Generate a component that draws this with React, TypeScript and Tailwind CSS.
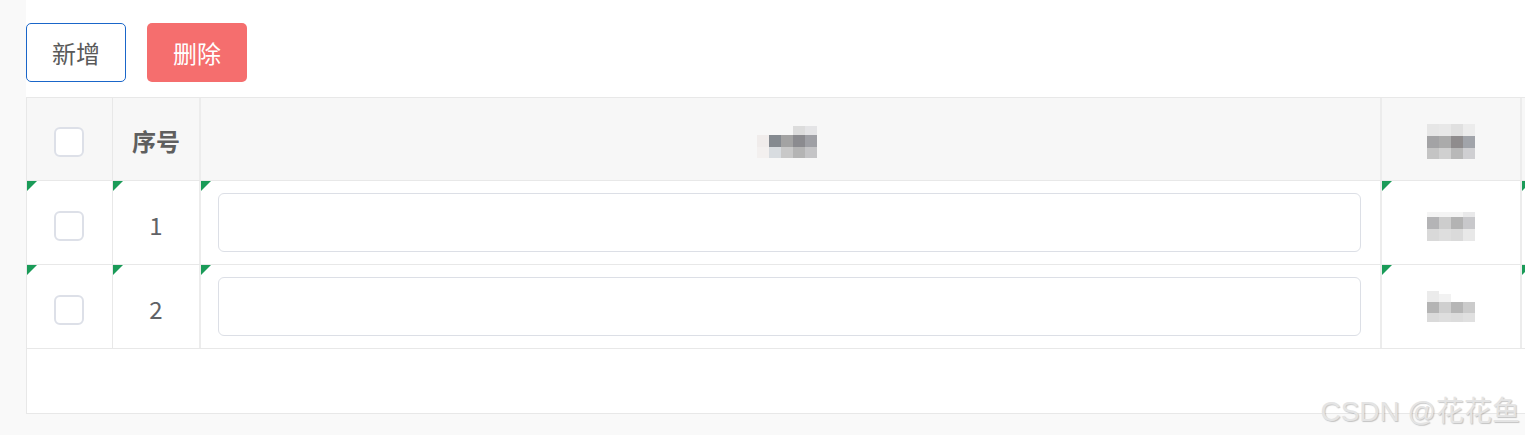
import React from "react";

type Cell = { x: number; y: number; w: number; h: number; c: string };

// blurred (mosaic) text cells, coords relative to each mosaic box
const headTitle: Cell[] = [
  { x: 36, y: 0, w: 12, h: 9, c: "#dcdcdc" },
  { x: 48, y: 0, w: 12, h: 9, c: "#e4e4e6" },
  { x: 0, y: 9, w: 12, h: 12, c: "#f0eceb" },
  { x: 12, y: 9, w: 12, h: 12, c: "#858a90" },
  { x: 24, y: 9, w: 12, h: 12, c: "#a3a3a3" },
  { x: 36, y: 9, w: 12, h: 12, c: "#8b8b8f" },
  { x: 48, y: 9, w: 12, h: 12, c: "#9fa0a5" },
  { x: 0, y: 21, w: 12, h: 11, c: "#f3f0ef" },
  { x: 12, y: 21, w: 12, h: 11, c: "#d8dce0" },
  { x: 24, y: 21, w: 12, h: 11, c: "#c8c8c8" },
  { x: 36, y: 21, w: 12, h: 11, c: "#b4b4b4" },
  { x: 48, y: 21, w: 12, h: 11, c: "#c4c4c6" },
];

const headType: Cell[] = [
  { x: 0, y: 0, w: 12, h: 12, c: "#e6e6e6" },
  { x: 12, y: 0, w: 12, h: 12, c: "#e8e8e8" },
  { x: 24, y: 0, w: 12, h: 12, c: "#e0e0e0" },
  { x: 36, y: 0, w: 12, h: 12, c: "#ececec" },
  { x: 0, y: 12, w: 12, h: 12, c: "#a3a3a5" },
  { x: 12, y: 12, w: 12, h: 12, c: "#ababab" },
  { x: 24, y: 12, w: 12, h: 12, c: "#8f8c8d" },
  { x: 36, y: 12, w: 12, h: 12, c: "#a1a4aa" },
  { x: 0, y: 24, w: 12, h: 11, c: "#c4c4c4" },
  { x: 12, y: 24, w: 12, h: 11, c: "#d0d0d0" },
  { x: 24, y: 24, w: 12, h: 11, c: "#b8b8b8" },
  { x: 36, y: 24, w: 12, h: 11, c: "#cfcfd2" },
];

const rowOne: Cell[] = [
  { x: 0, y: 0, w: 36, h: 5, c: "#f4f4f4" },
  { x: 36, y: 0, w: 12, h: 5, c: "#e9e9ea" },
  { x: 0, y: 5, w: 12, h: 12, c: "#b4b4b6" },
  { x: 12, y: 5, w: 12, h: 12, c: "#cdcdcd" },
  { x: 24, y: 5, w: 12, h: 12, c: "#b3b3b3" },
  { x: 36, y: 5, w: 12, h: 12, c: "#c8c8cb" },
  { x: 0, y: 17, w: 12, h: 12, c: "#d9d9d9" },
  { x: 12, y: 17, w: 12, h: 12, c: "#dedede" },
  { x: 24, y: 17, w: 12, h: 12, c: "#dadada" },
  { x: 36, y: 17, w: 12, h: 12, c: "#e8e8e8" },
];

const rowTwo: Cell[] = [
  { x: 0, y: 0, w: 12, h: 11, c: "#ebebeb" },
  { x: 12, y: 3, w: 12, h: 8, c: "#f2f2f2" },
  { x: 0, y: 11, w: 12, h: 11, c: "#b4b4b4" },
  { x: 12, y: 11, w: 12, h: 11, c: "#cfcfcf" },
  { x: 24, y: 11, w: 12, h: 11, c: "#b6b6b6" },
  { x: 36, y: 11, w: 12, h: 11, c: "#cbcbcb" },
  { x: 0, y: 22, w: 12, h: 9, c: "#dadada" },
  { x: 12, y: 22, w: 12, h: 9, c: "#dedede" },
  { x: 24, y: 22, w: 12, h: 9, c: "#dcdcdc" },
  { x: 36, y: 22, w: 12, h: 9, c: "#e0e0e0" },
];

function Mosaic({ cells, w, h }: { cells: Cell[]; w: number; h: number }) {
  return (
    <svg width={w} height={h} viewBox={`0 0 ${w} ${h}`} shapeRendering="crispEdges">
      {cells.map((c, i) => (
        <rect key={i} x={c.x} y={c.y} width={c.w} height={c.h} fill={c.c} />
      ))}
    </svg>
  );
}

function Checkbox() {
  return (
    <span className="mt-[6px] mr-[2px] block w-[30px] h-[30px] rounded-[6px] border-[2.5px] border-[#dde0e8] bg-white" />
  );
}

function Corner() {
  return (
    <span className="absolute left-0 top-0 w-0 h-0 border-t-[10px] border-r-[10px] border-t-[#1a9b58] border-r-transparent" />
  );
}

const rows = [
  { no: 1, mosaic: rowOne, mh: 29, mt: "mt-[7px]" },
  { no: 2, mosaic: rowTwo, mh: 31, mt: "mt-0" },
];

export default function App() {
  return (
    <div className="relative w-[1525px] h-[435px] overflow-hidden bg-[#f9f9f9] font-['Noto_Sans_CJK_SC','Liberation_Sans',sans-serif]">
      <div className="ml-[26px] w-[1540px] h-[414px] bg-white">
        <div className="flex gap-[21px] h-[97px] pt-[23px]">
          <button className="w-[100px] h-[59px] rounded-[5px] border border-[#1a66c9] bg-white text-[24px] text-[#5a5a5a]">
            新增
          </button>
          <button className="w-[100px] h-[59px] rounded-[5px] bg-[#f56e6e] text-[24px] text-white">
            删除
          </button>
        </div>

        <div className="h-[317px] border border-[#e8e8e8] overflow-hidden">
          {/* header */}
          <div className="flex h-[83px] bg-[#f7f7f7] border-b border-[#e8e8e8]">
            <div className="w-[86px] shrink-0 flex justify-center items-center border-r border-[#e8e8e8]">
              <Checkbox />
            </div>
            <div className="w-[88px] shrink-0 flex justify-center items-center border-r-2 border-[#ececec] pt-[4px] text-[24px] font-bold text-[#5f5f5f]">
              序号
            </div>
            <div className="w-[1181px] shrink-0 flex justify-center items-center border-r-2 border-[#ececec] pt-[6px] pr-[8px]">
              <Mosaic cells={headTitle} w={60} h={32} />
            </div>
            <div className="w-[140px] shrink-0 flex justify-center items-center border-r-2 border-[#ececec] pt-[5px]">
              <Mosaic cells={headType} w={48} h={35} />
            </div>
            <div className="w-[200px] shrink-0" />
          </div>

          {/* body */}
          {rows.map((r) => (
            <div key={r.no} className="flex h-[84px] border-b border-[#e8e8e8]">
              <div className="relative w-[86px] shrink-0 flex justify-center items-center border-r border-[#e8e8e8]">
                <Corner />
                <Checkbox />
              </div>
              <div className="relative w-[88px] shrink-0 flex justify-center items-center border-r-2 border-[#ececec] pt-[4px] text-[24px] text-[#606266]">
                <Corner />
                {r.no}
              </div>
              <div className="relative w-[1181px] shrink-0 flex items-center border-r-2 border-[#ececec] pl-[17px]">
                <Corner />
                <div className="w-[1143px] h-[59px] rounded-[6px] border border-[#dcdfe6] bg-white" />
              </div>
              <div className="relative w-[140px] shrink-0 flex justify-center items-center border-r-2 border-[#ececec]">
                <Corner />
                <div className={r.mt}>
                  <Mosaic cells={r.mosaic} w={48} h={r.mh} />
                </div>
              </div>
              <div className="relative w-[200px] shrink-0">
                <Corner />
              </div>
            </div>
          ))}
        </div>
      </div>

      <div className="absolute right-[5px] bottom-[9px] leading-none text-[28px] text-[#e4e4e4] font-['Liberation_Sans','Noto_Sans_CJK_SC',sans-serif] [text-shadow:1px_1px_1px_rgba(0,0,0,0.22)]">
        CSDN @花花鱼
      </div>
    </div>
  );
}
